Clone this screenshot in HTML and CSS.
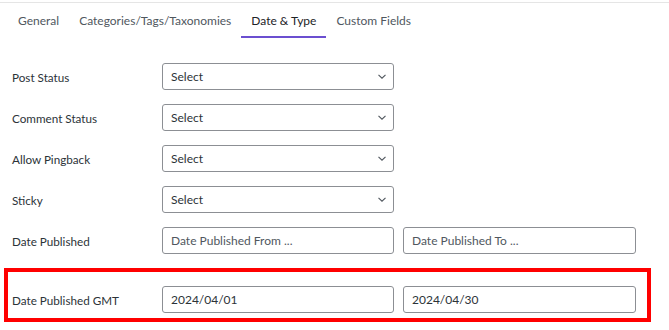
FILE: index.html
```html
<!DOCTYPE html>
<html>
<head>
<meta charset="utf-8">
<link rel="stylesheet" href="styles.css">
</head>
<body>
<div class="tabs">
  <div class="tab">General</div>
  <div class="tab">Categories/Tags/Taxonomies</div>
  <div class="tab active">Date &amp; Type</div>
  <div class="tab">Custom Fields</div>
</div>
<div class="form">
  <div class="row">
    <div class="label">Post Status</div>
    <div class="select">Select<svg class="chev" viewBox="0 0 8 5" width="8" height="5"><path d="M0.5 0.8l3.5 3.4 3.5-3.4" fill="none" stroke="#50575e" stroke-width="1.1"/></svg></div>
  </div>
  <div class="row">
    <div class="label">Comment Status</div>
    <div class="select">Select<svg class="chev" viewBox="0 0 8 5" width="8" height="5"><path d="M0.5 0.8l3.5 3.4 3.5-3.4" fill="none" stroke="#50575e" stroke-width="1.1"/></svg></div>
  </div>
  <div class="row">
    <div class="label">Allow Pingback</div>
    <div class="select">Select<svg class="chev" viewBox="0 0 8 5" width="8" height="5"><path d="M0.5 0.8l3.5 3.4 3.5-3.4" fill="none" stroke="#50575e" stroke-width="1.1"/></svg></div>
  </div>
  <div class="row">
    <div class="label">Sticky</div>
    <div class="select">Select<svg class="chev" viewBox="0 0 8 5" width="8" height="5"><path d="M0.5 0.8l3.5 3.4 3.5-3.4" fill="none" stroke="#50575e" stroke-width="1.1"/></svg></div>
  </div>
  <div class="row">
    <div class="label">Date Published</div>
    <div class="input placeholder">Date Published From ...</div>
    <div class="input placeholder">Date Published To ...</div>
  </div>
</div>
<div class="highlight">
  <div class="row">
    <div class="label">Date Published GMT</div>
    <div class="input">2024/04/01</div>
    <div class="input">2024/04/30</div>
  </div>
</div>
</body>
</html>
```
FILE: styles.css
```css
html, body {
  margin: 0;
  padding: 0;
  background: #ffffff;
}
body {
  font-family: Lato, "Open Sans", sans-serif;
  color: #1d2327;
  width: 669px;
  height: 330px;
  overflow: hidden;
}
.tabs {
  margin-top: 2px;
  border-top: 1px solid #e5e5e5;
  display: flex;
  padding-left: 8px;
  height: 35px;
}
.tab {
  padding: 0 10px;
  font-size: 12px;
  color: #50575e;
  line-height: 35px;
  border-bottom: 2px solid transparent;
  height: 33px;
  box-sizing: content-box;
  overflow: visible;
}
.tab.active {
  color: #1d2327;
  border-bottom-color: #6b4fd0;
}
.form {
  padding: 25px 0 0 12px;
  display: flex;
  flex-direction: column;
  gap: 14px;
}
.row {
  display: flex;
  align-items: center;
  gap: 9px;
}
.label {
  width: 141px;
  font-size: 11.7px;
  color: #2c3338;
}
.select, .input {
  box-sizing: border-box;
  width: 232px;
  height: 27px;
  border: 1px solid #8c8f94;
  border-radius: 3px;
  padding: 0 8px;
  font-size: 12px;
  color: #2c3338;
  display: flex;
  align-items: center;
}
.select {
  justify-content: space-between;
  padding-right: 7px;
}
.chev {
  display: block;
}
.input + .input {
  width: 233px;
}
.placeholder {
  color: #50575e;
}
.highlight {
  margin: 14px 18px 0 4px;
  border: 4px solid #ff0000;
  padding: 14px 0 5px 4px;
}
```
